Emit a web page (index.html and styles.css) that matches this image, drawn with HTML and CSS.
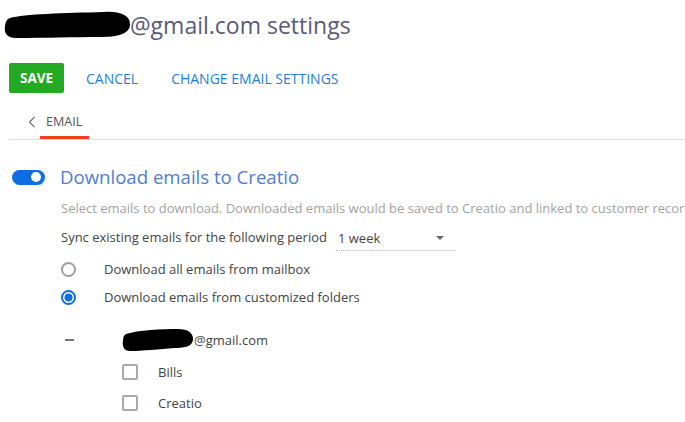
FILE: index.html
```html
<!DOCTYPE html>
<html>
<head>
<meta charset="utf-8">
<link rel="stylesheet" href="styles.css">
</head>
<body>
<div class="page">
  <div class="title">
    <svg class="blob blob-title" width="128" height="30" viewBox="0 0 128 30"><path d="M6 8 C 20 4, 60 3, 100 2 C 115 1, 126 5, 126 14 C 126 24, 114 27, 96 27 C 70 27, 40 28, 12 28 C 2 28, 0 22, 1 16 C 2 11, 3 9, 6 8 Z" fill="#000"/></svg>
    <span class="title-text">@gmail.com settings</span>
  </div>
  <div class="actions">
    <button class="btn-save">SAVE</button>
    <a class="link">CANCEL</a>
    <a class="link">CHANGE EMAIL SETTINGS</a>
  </div>
  <div class="tabs">
    <svg class="back" width="8" height="12" viewBox="0 0 8 12"><path d="M6.5 0.8 L1.5 6 L6.5 11.2" fill="none" stroke="#666" stroke-width="1.1"/></svg>
    <div class="tab active">EMAIL</div>
  </div>
  <div class="section">
    <div class="section-head">
      <div class="toggle"><span class="knob"></span></div>
      <span class="section-title">Download emails to Creatio</span>
    </div>
    <div class="content">
      <div class="desc">Select emails to download. Downloaded emails would be saved to Creatio and linked to customer records</div>
      <div class="sync">
        <span>Sync existing emails for the following period</span>
        <div class="select"><span>1 week</span><span class="caret"></span></div>
      </div>
      <div class="radio-row"><span class="radio"></span><span>Download all emails from mailbox</span></div>
      <div class="radio-row"><span class="radio checked"></span><span>Download emails from customized folders</span></div>
    </div>
    <div class="tree">
      <div class="tree-root">
        <span class="dash"></span>
        <span class="account"><svg class="blob blob-acc" width="72" height="24" viewBox="0 0 72 24"><path d="M4 6 C 16 2, 40 1, 56 1 C 66 1, 71 5, 71 11 C 71 18, 64 20, 52 20 C 38 21, 20 23, 8 23 C 2 23, 0 18, 1 13 C 1 9, 2 7, 4 6 Z" fill="#000"/></svg><span class="acc-text">@gmail.com</span></span>
      </div>
      <div class="check-row"><span class="checkbox"></span><span>Bills</span></div>
      <div class="check-row"><span class="checkbox"></span><span>Creatio</span></div>
    </div>
  </div>
</div>
</body>
</html>
```
FILE: styles.css
```css
html, body { margin: 0; padding: 0; background: #fff; }
body {
  font-family: "Open Sans", "Noto Sans", sans-serif;
  width: 685px;
  height: 422px;
  overflow: hidden;
  color: #444;
}
.page { padding-left: 9px; }
.title {
  display: flex;
  align-items: center;
  height: 50px;
  white-space: nowrap;
}
.blob-title { margin-left: -5px; margin-top: -1px; flex: none; }
.title-text {
  font-size: 23px;
  color: #5c5a78;
  margin-left: -2px;
}
.actions {
  display: flex;
  align-items: center;
  margin-top: 13px;
  height: 30px;
}
.btn-save {
  height: 30px;
  width: 55px;
  border: none;
  border-radius: 2px;
  background: #23a922;
  color: #fff;
  font-family: inherit;
  font-size: 13.5px;
  font-weight: 700;
  padding: 0;
}
.link {
  color: #1f7fe0;
  font-size: 14px;
  margin-left: 22px;
  padding-top: 1px;
}
.link + .link { margin-left: 33px; }
.tabs {
  display: flex;
  align-items: center;
  margin-top: 14px;
  height: 32px;
  border-bottom: 1px solid #dedede;
  padding-left: 19px;
}
.back { flex: none; margin-top: -2px; }
.tab {
  margin-left: 10px;
  font-size: 12.6px;
  color: #555;
  height: 32px;
  line-height: 30px;
  position: relative;
}
.tab.active::after {
  content: "";
  position: absolute;
  left: -6px;
  right: -7px;
  bottom: 0;
  height: 3px;
  background: #f0411e;
}
.section { padding-top: 25px; }
.section-head {
  display: flex;
  align-items: center;
  height: 22px;
}
.toggle {
  width: 33px;
  height: 15px;
  border-radius: 8px;
  background: #0d6ee0;
  margin-left: 3px;
  margin-top: 2px;
  position: relative;
  flex: none;
}
.knob {
  position: absolute;
  right: 4px;
  top: 2.5px;
  width: 10px;
  height: 10px;
  border-radius: 50%;
  background: #fff;
}
.section-title {
  font-size: 18.6px;
  color: #4c80d8;
  margin-left: 15px;
  white-space: nowrap;
}
.content { padding-left: 52px; font-size: 13px; }
.desc {
  color: #a3a3a3;
  white-space: nowrap;
  margin-top: 11px;
  height: 20px;
  line-height: 20px;
}
.sync {
  display: flex;
  align-items: center;
  margin-top: 9px;
  height: 20px;
  white-space: nowrap;
  color: #444;
}
.select {
  margin-left: 9px;
  width: 120px;
  display: flex;
  align-items: center;
  justify-content: space-between;
  border-bottom: 1px dotted #bbb;
  height: 24px;
  margin-top: 3px;
  box-sizing: border-box;
  padding-left: 2px;
  padding-right: 12px;
}
.caret {
  width: 0;
  height: 0;
  border-left: 4px solid transparent;
  border-right: 4px solid transparent;
  border-top: 4px solid #666;
}
.radio-row {
  display: flex;
  align-items: center;
  height: 28px;
  color: #444;
  white-space: nowrap;
}
.sync + .radio-row { margin-top: 8px; }
.radio {
  width: 15px;
  height: 15px;
  box-sizing: border-box;
  border: 2px solid #a0a0a0;
  border-radius: 50%;
  margin-right: 28px;
  flex: none;
  background: #fff;
}
.radio.checked {
  border-color: #0d6ee0;
  background: radial-gradient(circle, #0d6ee0 0 3.6px, #fff 4.4px);
}
.tree { font-size: 13px; padding-top: 14px; }
.tree-root {
  display: flex;
  align-items: center;
  height: 30px;
}
.dash {
  width: 9px;
  height: 1.5px;
  background: #777;
  margin-left: 56px;
  flex: none;
}
.account {
  display: flex;
  align-items: center;
  margin-left: 48px;
}
.blob-acc { flex: none; margin-top: -1px; }
.acc-text { margin-left: 0px; color: #444; }
.check-row {
  display: flex;
  align-items: center;
  height: 31px;
  padding-left: 113px;
  color: #444;
}
.tree-root + .check-row { margin-top: 1px; }
.checkbox {
  width: 16px;
  height: 16px;
  box-sizing: border-box;
  border: 2px solid #aaa;
  border-radius: 2px;
  margin-right: 20px;
  flex: none;
}
```
